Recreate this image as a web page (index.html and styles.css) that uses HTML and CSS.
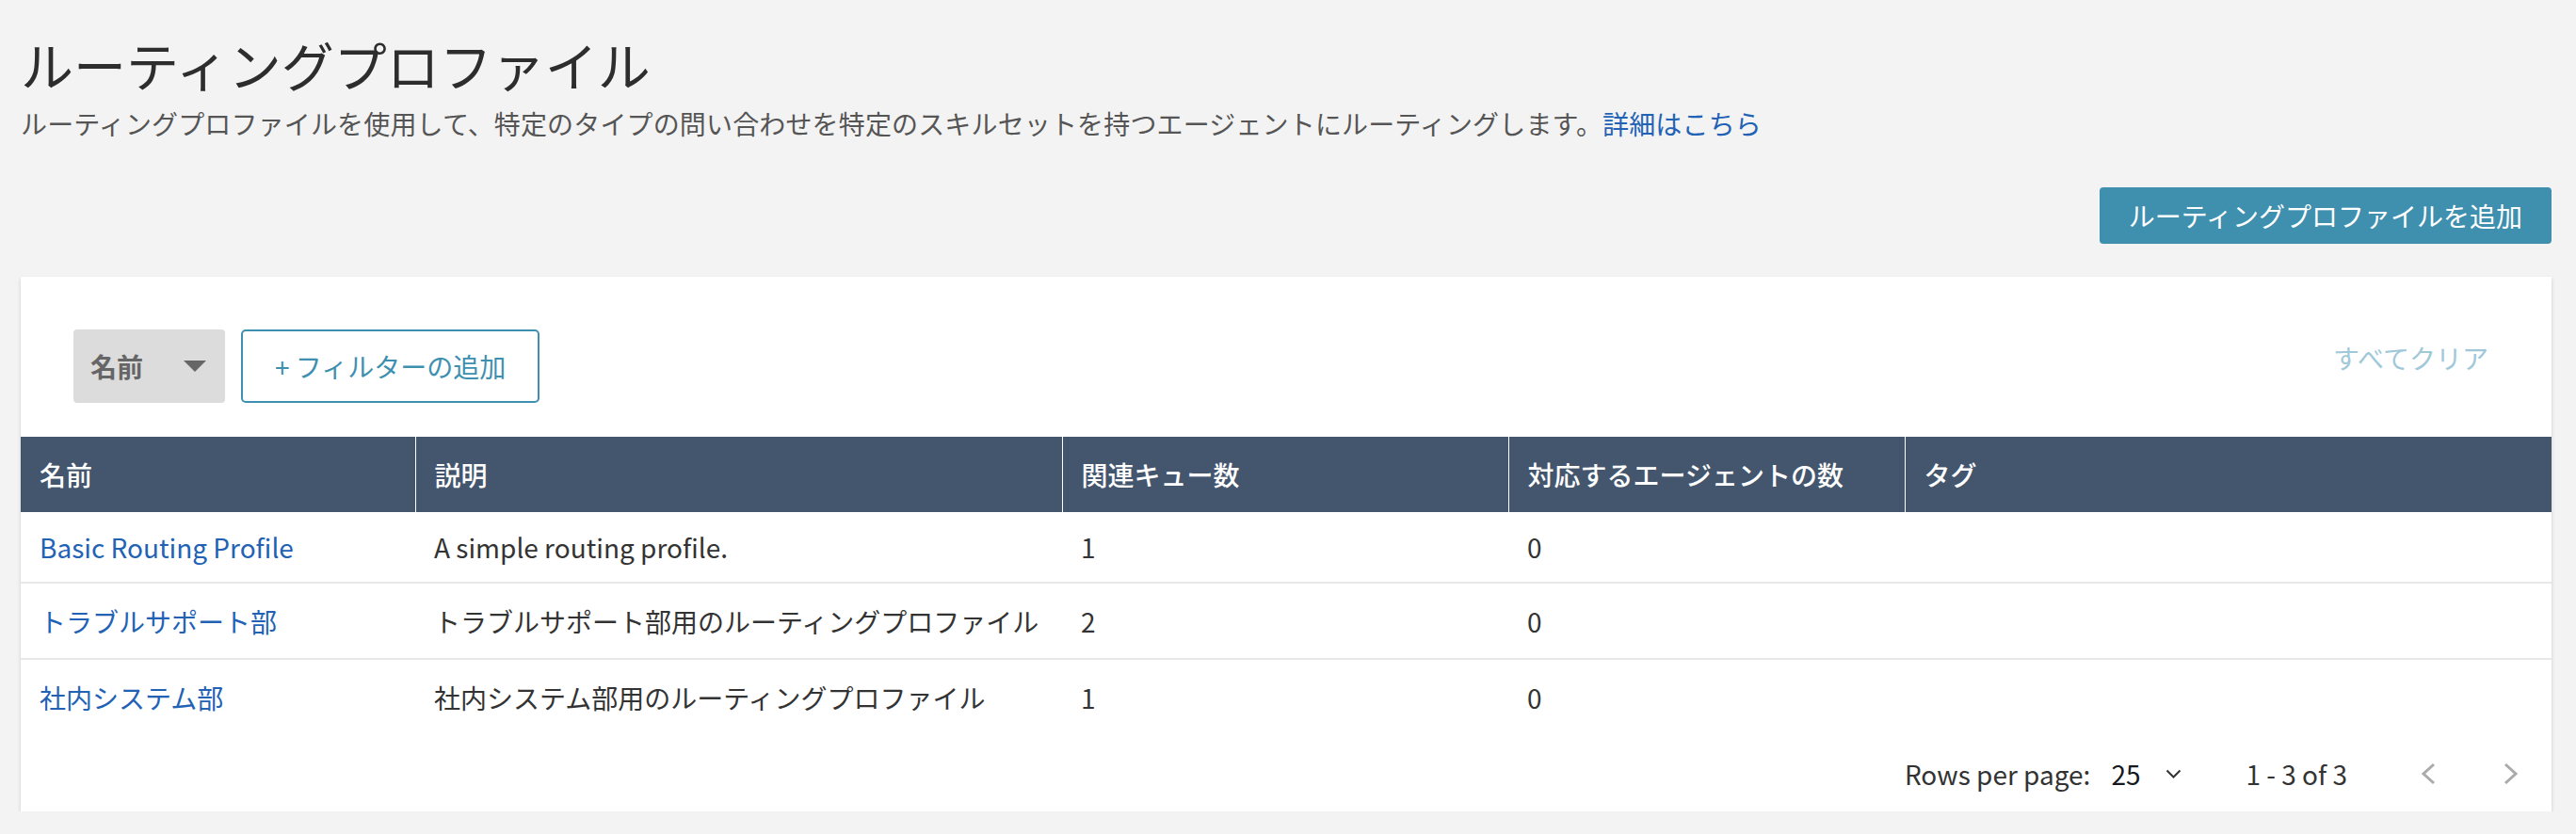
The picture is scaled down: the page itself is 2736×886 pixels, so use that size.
FILE: index.html
```html
<!DOCTYPE html>
<html lang="ja">
<head>
<meta charset="utf-8">
<title>ルーティングプロファイル</title>
<link rel="stylesheet" href="styles.css">
</head>
<body>
<div class="page">
  <header class="page-header">
    <h1 class="title">ルーティングプロファイル</h1>
    <p class="subtitle">ルーティングプロファイルを使用して、特定のタイプの問い合わせを特定のスキルセットを持つエージェントにルーティングします。<a class="link" href="#">詳細はこちら</a></p>
  </header>
  <div class="actions">
    <button class="btn-primary" type="button">ルーティングプロファイルを追加</button>
  </div>
  <section class="card">
    <div class="filter-bar">
      <div class="filter-left">
        <div class="select">
          <span class="select-label">名前</span>
          <svg class="select-caret" width="24" height="12" viewBox="0 0 24 12"><polygon points="0,0 24,0 12,12" fill="#666"/></svg>
        </div>
        <button class="btn-outline" type="button">+ フィルターの追加</button>
      </div>
      <a class="clear-all" href="#">すべてクリア</a>
    </div>
    <table class="grid">
      <colgroup>
        <col class="col-name">
        <col class="col-desc">
        <col class="col-queue">
        <col class="col-agent">
        <col class="col-tag">
      </colgroup>
      <thead>
        <tr>
          <th>名前</th>
          <th>説明</th>
          <th>関連キュー数</th>
          <th>対応するエージェントの数</th>
          <th>タグ</th>
        </tr>
      </thead>
      <tbody>
        <tr>
          <td><a class="link" href="#">Basic Routing Profile</a></td>
          <td>A simple routing profile.</td>
          <td>1</td>
          <td>0</td>
          <td></td>
        </tr>
        <tr>
          <td><a class="link" href="#">トラブルサポート部</a></td>
          <td>トラブルサポート部用のルーティングプロファイル</td>
          <td>2</td>
          <td>0</td>
          <td></td>
        </tr>
        <tr>
          <td><a class="link" href="#">社内システム部</a></td>
          <td>社内システム部用のルーティングプロファイル</td>
          <td>1</td>
          <td>0</td>
          <td></td>
        </tr>
      </tbody>
    </table>
    <div class="pager">
      <span class="pager-label">Rows per page:</span>
      <span class="pager-size">25</span>
      <svg class="pager-caret" width="17" height="10" viewBox="0 0 17 10"><path d="M1.5 1.5 L8.5 8.5 L15.5 1.5" fill="none" stroke="#333" stroke-width="2"/></svg>
      <span class="pager-range">1 - 3 of 3</span>
      <svg class="pager-prev" width="16" height="24" viewBox="0 0 16 24"><path d="M14 2 L3 12 L14 22" fill="none" stroke="#aaa" stroke-width="3"/></svg>
      <svg class="pager-next" width="16" height="24" viewBox="0 0 16 24"><path d="M2 2 L13 12 L2 22" fill="none" stroke="#aaa" stroke-width="3"/></svg>
    </div>
  </section>
</div>
</body>
</html>
```

FILE: styles.css
```css
html, body {
  margin: 0;
  padding: 0;
}

body {
  background: #f3f3f3;
  font-family: "Noto Sans CJK JP", "Noto Sans", sans-serif;
  color: #333;
}

.page {
  padding: 28px 26px 0 22px;
}

.title {
  margin: 0;
  font-size: 56px;
  line-height: 80px;
  font-weight: 400;
  color: #2d2d2d;
}

.subtitle {
  margin: 3px 0 0;
  font-size: 28px;
  line-height: 40px;
  letter-spacing: 0.15px;
  color: #555;
}

.link {
  color: #2262b5;
  text-decoration: none;
}

.actions {
  display: flex;
  justify-content: flex-end;
  margin-top: 48px;
}

.btn-primary {
  height: 60px;
  padding: 0 31px;
  border: 0;
  border-radius: 4px;
  background: #3f8fae;
  color: #fff;
  font-family: inherit;
  font-size: 28px;
  line-height: 60px;
}

.card {
  margin-top: 35px;
  background: #fff;
  box-shadow: 0 2px 4px rgba(0, 0, 0, 0.16);
}

.filter-bar {
  display: flex;
  justify-content: space-between;
  align-items: flex-start;
  padding: 56px 67px 36px 56px;
}

.filter-left {
  display: flex;
  gap: 17px;
}

.select {
  width: 161px;
  height: 78px;
  box-sizing: border-box;
  padding: 0 20px 0 18px;
  display: flex;
  align-items: center;
  justify-content: space-between;
  background: #dcdcdc;
  border-radius: 4px;
  color: #666;
  font-weight: 700;
  font-size: 28px;
}

.select-caret {
  display: block;
}

.btn-outline {
  height: 78px;
  box-sizing: border-box;
  padding: 0 34px;
  border: 2px solid #3d90b0;
  border-radius: 5px;
  background: #fff;
  color: #3d90b0;
  font-family: inherit;
  font-size: 28px;
}

.clear-all {
  margin-top: 10px;
  font-size: 28px;
  line-height: 40px;
  color: #9fc9d9;
  text-decoration: none;
}

.grid {
  width: 100%;
  border-collapse: collapse;
  table-layout: fixed;
}

.col-name { width: 419px; }
.col-desc { width: 687px; }
.col-queue { width: 474px; }
.col-agent { width: 421px; }
.col-tag { width: 687px; }

.grid th {
  height: 80px;
  padding: 0 20px;
  background: #43566e;
  color: #fff;
  font-weight: 500;
  font-size: 28px;
  text-align: left;
  border-left: 1px solid #fff;
  white-space: nowrap;
}

.grid th:first-child {
  border-left: 0;
}

.grid td {
  height: 79px;
  padding: 0 20px;
  font-size: 28px;
  color: #333;
  border-bottom: 2px solid #e8e8e8;
  white-space: nowrap;
}

.grid tbody tr:first-child td {
  height: 74px;
}

.grid tbody tr:last-child td {
  border-bottom: 0;
  height: 80px;
}

.pager {
  display: flex;
  justify-content: flex-end;
  align-items: center;
  height: 81px;
  padding-right: 35px;
  font-size: 28px;
  color: #333;
}

.pager-size {
  margin-left: 22px;
  color: #16191f;
}

.pager-caret {
  margin-left: 26px;
  display: block;
}

.pager-range {
  margin-left: 69px;
}

.pager-prev {
  margin-left: 78px;
  display: block;
}

.pager-next {
  margin-left: 72px;
  display: block;
}
```
